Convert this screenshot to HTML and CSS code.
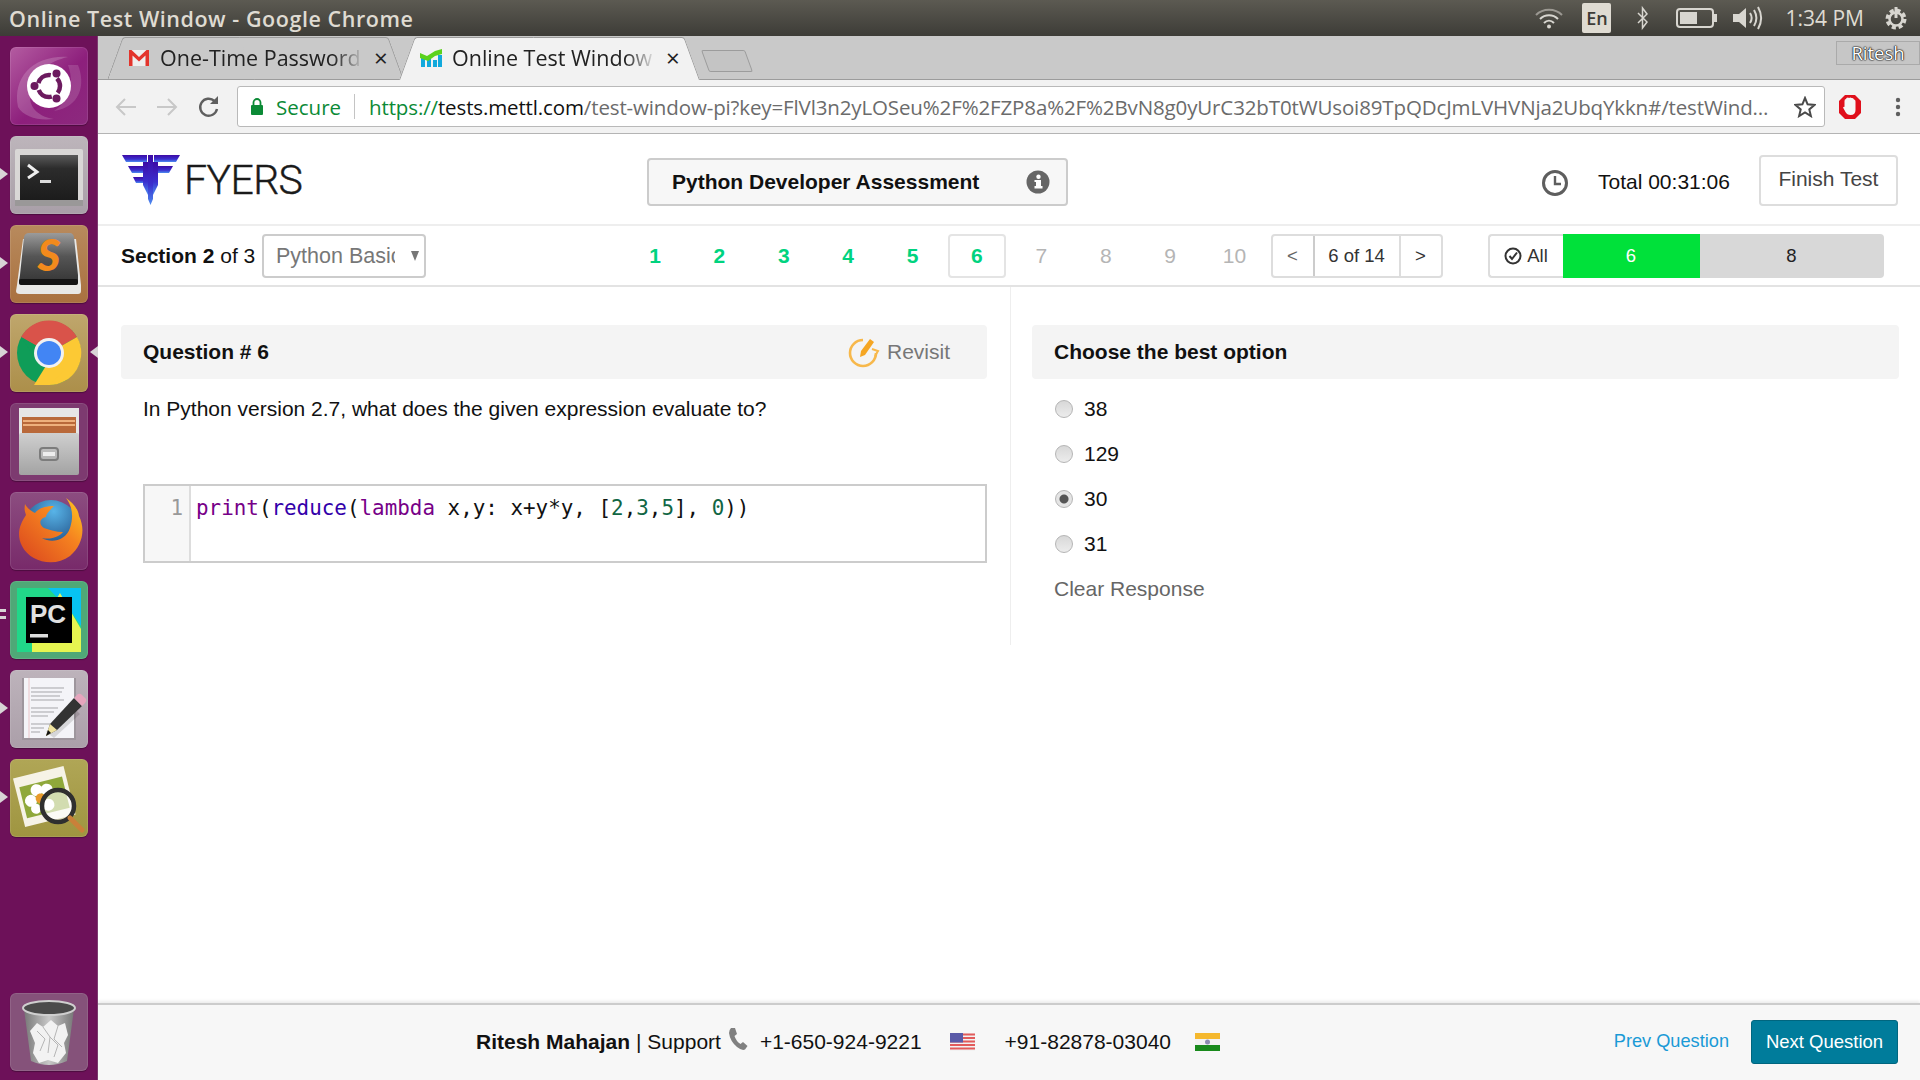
FILE: index.html
```html
<!DOCTYPE html>
<html lang="en">
<head>
    <meta charset="UTF-8">
    <meta name="viewport" content="width=device-width, initial-scale=1.0">
    <title>Online Test Window</title>
    <link rel="stylesheet" href="styles.css">
</head>
<body>
    <div class="topbar">
        <div class="win-title">Online Test Window - Google Chrome</div>
        <div class="tray">
            <svg class="tray-wifi" width="30" height="24" viewBox="0 0 30 24" fill="none" stroke="#d8d6d0" stroke-width="2"><path d="M2 9 C9 2 21 2 28 9" opacity=".55"/><path d="M6 13 C11 8 19 8 24 13"/><path d="M10 17 C13 14 17 14 20 17"/><circle cx="15" cy="20.500" r="2" fill="#d8d6d0" stroke="none"/></svg>
            <div class="tray-lang">En</div>
            <svg class="tray-bt" width="16" height="26" viewBox="0 0 16 26" fill="none" stroke="#d8d6d0" stroke-width="1.500"><path d="M3 8 L12 17 L7.500 23 V3 L12 9 L3 18"/></svg>
            <svg class="tray-batt" width="42" height="24" viewBox="0 0 42 24"><rect x="1" y="3" width="36" height="18" rx="3" fill="none" stroke="#d8d6d0" stroke-width="2"/><rect x="4" y="6" width="17" height="12" fill="#d8d6d0"/><rect x="38" y="8" width="3" height="8" fill="#d8d6d0"/></svg>
            <svg class="tray-vol" width="34" height="28" viewBox="0 0 34 28" fill="none" stroke="#d8d6d0" stroke-width="2"><path d="M2 10 H8 L15 4 V24 L8 18 H2 Z" fill="#d8d6d0" stroke="none"/><path d="M19 9 C21 12 21 16 19 19"/><path d="M23 6 C26 11 26 17 23 22"/><path d="M27 3 C31 10 31 18 27 25"/></svg>
            <div class="tray-time">1:34 PM</div>
            <svg class="tray-gear" width="28" height="30" viewBox="0 0 28 30" fill="none" stroke="#d8d6d0"><circle cx="14" cy="16" r="8.500" stroke-width="4" stroke-dasharray="4 2.700"/><circle cx="14" cy="16" r="6.500" stroke-width="2.500"/><path d="M14 4 V15" stroke-width="3"/></svg>
        </div>
    </div>

    <div class="desktop">
        <aside class="launcher">
            <div class="tile tile-ubuntu">
                <svg width="78" height="78" viewBox="0 0 78 78"><path d="M8 60 C2 30 24 8 58 10 C40 14 20 26 20 50 C20 62 30 70 44 72 C28 74 14 70 8 60 Z" fill="#fff" opacity=".18"/><path d="M68 18 C76 38 70 60 44 64 C56 56 66 40 58 18 Z" fill="#fff" opacity=".14"/><circle cx="39" cy="39" r="22" fill="#fff"/><circle cx="39" cy="39" r="11" fill="none" stroke="#6c1a5f" stroke-width="4.500" stroke-dasharray="16 7.040" stroke-dashoffset="-14.300"/><circle cx="24.500" cy="39" r="4" fill="#6c1a5f"/><circle cx="46.500" cy="26.500" r="4" fill="#6c1a5f"/><circle cx="46.500" cy="51.500" r="4" fill="#6c1a5f"/></svg>
            </div>
            <div class="tile tile-terminal has-pip">
                <svg width="78" height="78" viewBox="0 0 78 78"><defs><linearGradient id="termg" x1="0" y1="0" x2="0" y2="1"><stop offset="0" stop-color="#5a5a5a"/><stop offset=".3" stop-color="#2c2c2c"/><stop offset="1" stop-color="#1c1c1c"/></linearGradient></defs><rect x="5" y="13" width="68" height="57" rx="2" fill="#d9d7d6"/><rect x="5" y="64" width="68" height="6" fill="#9a9898"/><rect x="10" y="19" width="58" height="45" fill="url(#termg)"/><polyline points="18,29 27,36 18,42" fill="none" stroke="#eee" stroke-width="3"/><rect x="30" y="44" width="11" height="3" fill="#ddd"/></svg>
            </div>
            <div class="tile tile-sublime has-pip">
                <svg width="78" height="78" viewBox="0 0 78 78"><defs><linearGradient id="subg" x1="0" y1="0" x2="0" y2="1"><stop offset="0" stop-color="#9b9b9b"/><stop offset=".45" stop-color="#555"/><stop offset="1" stop-color="#333"/></linearGradient></defs><path d="M7 60 L13 14 H66 L71 60 V66 Q71 69 68 69 H10 Q6 69 6 66 Z" fill="#e8e8e6"/><path d="M10 50 L14 12 Q15 8 19 8 H60 Q63 8 64 12 L68 50 V56 Q68 60 64 60 H13 Q9 60 9 56 Z" fill="url(#subg)"/><rect x="9" y="54" width="59" height="6" rx="2" fill="#141414"/><text class="sublime-s" x="39" y="46" text-anchor="middle">S</text></svg>
            </div>
            <div class="tile tile-chrome has-pip has-pip-right">
                <svg width="78" height="78" viewBox="0 0 78 78"><circle cx="39" cy="39" r="32" fill="#0f9d58"/><path d="M39 39 L11 23 A32 32 0 0 1 67 23 Z" fill="#d9534a"/><path d="M39 39 L67 23 A32 32 0 0 1 39 71 Z" fill="#fcc934"/><path d="M11 23 L27 47 L39 39 Z" fill="#0f9d58"/><path d="M24 71 L39 47 L55 56 L39 71 Z" fill="#fcc934"/><circle cx="39" cy="39" r="15" fill="#f1f1f1"/><circle cx="39" cy="39" r="12" fill="#4285f4"/></svg>
            </div>
            <div class="tile tile-files">
                <svg width="78" height="78" viewBox="0 0 78 78"><defs><linearGradient id="fileg" x1="0" y1="0" x2="0" y2="1"><stop offset="0" stop-color="#cfcfcf"/><stop offset="1" stop-color="#a3a3a3"/></linearGradient></defs><rect x="9" y="5" width="60" height="28" fill="#e6e6e6"/><rect x="12" y="14" width="54" height="16" fill="#b9693a"/><path d="M13 18 H65 M13 22 H65" stroke="#eeb07c" stroke-width="2"/><rect x="9" y="30" width="60" height="42" rx="2" fill="url(#fileg)"/><rect x="30" y="45" width="18" height="12" rx="3" fill="none" stroke="#7c7c7c" stroke-width="2"/><rect x="33" y="49" width="12" height="4" fill="#eee"/></svg>
            </div>
            <div class="tile tile-firefox">
                <svg width="78" height="78" viewBox="0 0 78 78"><defs><radialGradient id="ffblue" cx=".55" cy=".2" r=".8"><stop offset="0" stop-color="#58b4e8"/><stop offset="1" stop-color="#14386f"/></radialGradient><linearGradient id="ffor" x1="1" y1="0" x2="0" y2="1"><stop offset="0" stop-color="#ffcb20"/><stop offset=".4" stop-color="#f58220"/><stop offset="1" stop-color="#d9431e"/></linearGradient></defs><circle cx="41" cy="36" r="28" fill="url(#ffblue)"/><path d="M15 12 C14 18 15 20 16 23 C10 32 6 42 12 54 C20 70 44 76 60 64 C72 54 76 38 69 24 C68 16 62 10 56 6 C62 14 64 24 60 36 C56 48 42 52 32 46 C42 48 50 44 53 40 C46 40 40 38 34 36 C28 32 30 26 36 25 C36 22 40 18 44 14 C34 14 28 17 25 21 C21 19 17 16 15 12 Z" fill="url(#ffor)"/></svg>
            </div>
            <div class="tile tile-pycharm has-pip has-pip-double">
                <svg width="78" height="78" viewBox="0 0 78 78"><rect x="7" y="7" width="64" height="64" fill="#21d789"/><path d="M38 7 H71 V45 L62 32 Z" fill="#07c3f2"/><path d="M22 58 L50 12 L71 48 V71 H22 Z" fill="#fcf84a" opacity=".9"/><rect x="16" y="16" width="46" height="46" fill="#000"/><text class="pc-text" x="20" y="42">PC</text><rect x="20" y="53" width="18" height="3.500" fill="#ddd"/></svg>
            </div>
            <div class="tile tile-editor has-pip">
                <svg width="78" height="78" viewBox="0 0 78 78"><rect x="12" y="8" width="54" height="62" fill="#9e969d"/><rect x="14" y="8" width="50" height="60" fill="#f4f4f8"/><path d="M21 18 H54 M21 22 H52 M21 26 H50 M21 30 H54 M21 38 H48 M21 42 H44 M21 46 H38 M21 54 H40 M21 58 H34 M21 62 H30" stroke="#a5a5a9" stroke-width="1"/><path d="M19 8 V68" stroke="#e9b9bb" stroke-width=".8"/><path d="M36 62 L62 36 L70 44 L44 68 Z" fill="#000" opacity=".12"/><path d="M36 66 L40 54 L64 28 L72 36 L47 60 Z" fill="#333"/><path d="M64 28 L68 24 Q70 23 72 25 L76 29 Q77 31 75 33 L72 36 Z" fill="#e6a5bd"/><path d="M36 66 L40 54 L47 60 Z" fill="#f0e3a0"/><path d="M36 66 L38 60 L41 63 Z" fill="#111"/></svg>
            </div>
            <div class="tile tile-viewer has-pip">
                <svg width="78" height="78" viewBox="0 0 78 78"><g transform="rotate(-14 36 36)"><rect x="8" y="12" width="52" height="50" fill="#f6f3e6"/><rect x="12" y="22" width="44" height="32" fill="#8fa83a"/><g fill="#fff"><circle cx="20" cy="38" r="6"/><circle cx="28" cy="29" r="6"/><circle cx="38" cy="31" r="6"/><circle cx="23" cy="47" r="5"/><circle cx="36" cy="46" r="6"/></g><circle cx="30" cy="38" r="5" fill="#e89a2b"/></g><circle cx="48" cy="47" r="16" fill="#fff" fill-opacity=".6" stroke="#2f2f2f" stroke-width="4.500"/><path d="M60 59 L72 71" stroke="#c9803a" stroke-width="5" stroke-linecap="round"/></svg>
            </div>
            <div class="tile tile-trash">
                <svg width="78" height="78" viewBox="0 0 78 78"><defs><linearGradient id="bing" x1="0" y1="0" x2="1" y2="0"><stop offset="0" stop-color="#777"/><stop offset=".5" stop-color="#c8c8c8"/><stop offset="1" stop-color="#777"/></linearGradient></defs><path d="M14 16 L21 68 Q39 76 57 68 L64 16 Q39 26 14 16 Z" fill="url(#bing)"/><ellipse cx="39" cy="15" rx="26" ry="7" fill="#4b4b4b" stroke="#cfcfcf" stroke-width="2"/><path d="M20 38 L27 30 L33 34 L41 27 L48 33 L55 30 L58 42 L54 50 L56 60 L48 70 L38 67 L29 70 L23 60 L25 50 Z" fill="#f2f2f2"/><path d="M27 38 L35 46 L30 58 M33 34 L40 44 L38 60 M48 33 L44 46 L52 54 M40 44 L48 52 L44 64" stroke="#b5b5b5" fill="none"/></svg>
            </div>
        </aside>

        <div class="browser">
            <div class="tabstrip">
                <div class="tab">
                    <svg class="favicon" width="22" height="18" viewBox="0 0 22 18"><rect x="1" y="1" width="20" height="16" fill="#eee"/><path d="M1 17 V1 H3.500 L11 8 L18.500 1 H21 V17 H17.500 V6.500 L11 12.500 L4.500 6.500 V17 Z" fill="#e3342c"/></svg>
                    <span class="tab-label">One-Time Password</span>
                    <span class="tab-close">×</span>
                </div>
                <div class="tab tab-active">
                    <svg class="favicon" width="22" height="18" viewBox="0 0 22 18"><rect x="1" y="9" width="4" height="9" fill="#11a9dc"/><rect x="7" y="8" width="4" height="10" fill="#11a9dc"/><rect x="13" y="11" width="4" height="7" fill="#11a9dc"/><rect x="18" y="6" width="4" height="12" fill="#11a9dc"/><path d="M0 4 L7 7 L15 2 L22 0 V5 L15 7 L8 12 L0 9 Z" fill="#5bd21c"/></svg>
                    <span class="tab-label">Online Test Window</span>
                    <span class="tab-close">×</span>
                </div>
                <div class="newtab"></div>
                <div class="profile">Ritesh</div>
            </div>

            <div class="toolbar">
                <svg class="nav-icon" width="22" height="20" viewBox="0 0 22 20" fill="none" stroke="#c8c8c8" stroke-width="2"><path d="M21 10 H2 M10 2 L2 10 L10 18"/></svg>
                <svg class="nav-icon" width="22" height="20" viewBox="0 0 22 20" fill="none" stroke="#c8c8c8" stroke-width="2"><path d="M1 10 H20 M12 2 L20 10 L12 18"/></svg>
                <svg class="nav-icon" width="22" height="24" viewBox="0 0 22 24" fill="none" stroke="#5f5f5f" stroke-width="2.400"><path d="M19 14 A8.500 8.500 0 1 1 16.500 6"/><path d="M20 1 V9 H12" fill="#5f5f5f" stroke="none"/></svg>
                <div class="omnibox">
                    <svg class="lock" width="14" height="17" viewBox="0 0 14 17"><rect x="1" y="7" width="12" height="10" rx="1" fill="#0b8a36"/><path d="M3.500 7 V4.500 A3.500 3.500 0 0 1 10.500 4.500 V7" fill="none" stroke="#0b8a36" stroke-width="1.800"/></svg>
                    <span class="secure">Secure</span>
                    <span class="omni-sep"></span>
                    <span class="url"><span class="url-scheme">https://</span><span class="url-host">tests.mettl.com</span>/test-window-pi?key=FlVl3n2yLOSeu%2F%2FZP8a%2F%2BvN8g0yUrC32bT0tWUsoi89TpQDcJmLVHVNja2UbqYkkn#/testWind…</span>
                    <svg class="star" width="22" height="22" viewBox="0 0 22 22"><path d="M11 2 L13.600 8.300 L20.500 8.900 L15.300 13.400 L16.900 20.100 L11 16.500 L5.100 20.100 L6.700 13.400 L1.500 8.900 L8.400 8.300 Z" fill="none" stroke="#4a4a4a" stroke-width="2"/></svg>
                </div>
                <svg class="adblock" width="24" height="26" viewBox="0 0 24 26"><path d="M7 1 H17 L23 7 V19 L17 25 H7 L1 19 V7 Z" fill="#e0101c"/><path d="M6.500 13 V7 Q6.500 5 8 5 L8.500 4 Q10 3 11 4 Q12.500 3 13.500 4 Q15.500 3.500 16 5.500 Q17.500 5.500 17.500 7.500 V16 Q17.500 21 12.500 21 Q9 21 7.500 18 L5 13.500 Q6 12.500 6.500 13 Z" fill="#f6f6f6"/></svg>
                <svg class="menu-dots" width="6" height="20" viewBox="0 0 6 20" fill="#5f5f5f"><circle cx="3" cy="3" r="2.200"/><circle cx="3" cy="10" r="2.200"/><circle cx="3" cy="17" r="2.200"/></svg>
            </div>

            <div class="page">
                <header class="page-head">
                    <div class="logo">
                        <svg width="58" height="50" viewBox="0 0 58 50"><defs><linearGradient id="fyersg" x1="0" y1="0" x2="0" y2="1"><stop offset="0" stop-color="#3d0aa5"/><stop offset=".6" stop-color="#3a30cf"/><stop offset="1" stop-color="#4d8df0"/></linearGradient></defs><path d="M0 0 H25 V7 H4 Z" fill="url(#fyersg)"/><path d="M32 0 H58 L54 7 H32 Z" fill="url(#fyersg)"/><path d="M6 11 H24 V18 H10 Z" fill="url(#fyersg)"/><path d="M33 11 H51 L47 18 H33 Z" fill="url(#fyersg)"/><path d="M11 22 H24 V28 H14 Z" fill="url(#fyersg)"/><path d="M26 0 H31 V44 L28.500 50 L26 44 Z" fill="url(#fyersg)"/><path d="M21 7 H26 V40 L21 30 Z" fill="url(#fyersg)"/><path d="M31 7 H36 V30 L31 40 Z" fill="url(#fyersg)"/></svg>
                        <span class="logo-text">FYERS</span>
                    </div>
                    <div class="assessment">
                        <span>Python Developer Assessment</span>
                        <svg width="24" height="24" viewBox="0 0 24 24"><circle cx="12" cy="12" r="11.500" fill="#666"/><rect x="10" y="10" width="5" height="8" fill="#fff"/><rect x="8.500" y="16" width="8" height="2.500" fill="#fff"/><rect x="8.500" y="10" width="3" height="2" fill="#fff"/><circle cx="12.500" cy="6.800" r="2.200" fill="#fff"/></svg>
                    </div>
                    <div class="timer">
                        <svg width="28" height="28" viewBox="0 0 28 28" fill="none" stroke="#5e5e5e" stroke-width="3"><circle cx="14" cy="14" r="11.500"/><path d="M14 7 V15 H20" stroke-width="2.400"/></svg>
                        <span>Total 00:31:06</span>
                    </div>
                    <button class="finish">Finish Test</button>
                </header>

                <nav class="section-bar">
                    <div class="section-label"><b>Section 2</b> of 3</div>
                    <div class="section-select"><span>Python Basic</span><i class="caret"></i></div>
                    <div class="q-numbers">
                        <span class="q-num q-done">1</span>
                        <span class="q-num q-done">2</span>
                        <span class="q-num q-done">3</span>
                        <span class="q-num q-done">4</span>
                        <span class="q-num q-done">5</span>
                        <span class="q-num q-done q-current">6</span>
                        <span class="q-num">7</span>
                        <span class="q-num">8</span>
                        <span class="q-num">9</span>
                        <span class="q-num">10</span>
                    </div>
                    <div class="pager">
                        <span class="pager-arrow">&lt;</span>
                        <span class="pager-count">6 of 14</span>
                        <span class="pager-arrow pager-next">&gt;</span>
                    </div>
                    <div class="progress">
                        <div class="progress-all">
                            <svg width="18" height="18" viewBox="0 0 18 18" fill="none" stroke="#333" stroke-width="2"><circle cx="9" cy="9" r="7.500"/><path d="M5.500 9 L8 12 L13 5.500"/></svg>
                            All
                        </div>
                        <div class="progress-done">6</div>
                        <div class="progress-left">8</div>
                    </div>
                </nav>

                <main class="test-body">
                    <section class="col-question">
                        <div class="panel-head">
                            <h3>Question # 6</h3>
                            <div class="revisit">
                                <svg width="32" height="32" viewBox="0 0 32 32" fill="none"><path d="M15 4 A13 13 0 1 0 28 17" stroke="#f7b84b" stroke-width="2.600"/><path d="M24 13 L30 15 L27 20" stroke="#f7b84b" stroke-width="2"/><path d="M12 21 L13 15 L22 3 L26 6 L17 19 Z" fill="#f5a623"/></svg>
                                <span>Revisit</span>
                            </div>
                        </div>
                        <p class="q-text">In Python version 2.7, what does the given expression evaluate to?</p>
                        <div class="code-box">
                            <div class="code-gutter">1</div>
                            <pre class="code-line"><span class="cm-kw">print</span>(<span class="cm-bi">reduce</span>(<span class="cm-kw">lambda</span> x,y: x+y*y, [<span class="cm-num">2</span>,<span class="cm-num">3</span>,<span class="cm-num">5</span>], <span class="cm-num">0</span>))</pre>
                        </div>
                    </section>
                    <section class="col-answer">
                        <div class="panel-head">
                            <h3>Choose the best option</h3>
                        </div>
                        <label class="option"><input type="radio" name="answer"><span>38</span></label>
                        <label class="option"><input type="radio" name="answer"><span>129</span></label>
                        <label class="option"><input type="radio" name="answer" checked><span>30</span></label>
                        <label class="option"><input type="radio" name="answer"><span>31</span></label>
                        <div class="clear-response">Clear Response</div>
                    </section>
                </main>

                <footer class="page-foot">
                    <div class="support">
                        <b>Ritesh Mahajan</b> <span class="support-label">| Support</span>
                        <svg class="phone" width="20" height="24" viewBox="0 0 20 24"><path d="M3 1 L7 1 L9 7 L6.500 9 Q8 14 12.500 17 L15 15 L19.500 19 L17 22.500 Q14 24 9 20 Q2 14 1 6 Q1 3 3 1 Z" fill="#808080"/></svg>
                        <span class="phone-no">+1-650-924-9221</span>
                        <svg class="flag" width="25" height="18" viewBox="0 0 25 18"><rect width="25" height="18" fill="#f2f2f2"/><path d="M0 1.500 H25 M0 5 H25 M0 8.500 H25 M0 12 H25 M0 15.500 H25" stroke="#e25b5b" stroke-width="1.800"/><rect width="13" height="9.500" fill="#5a5aa8"/></svg>
                        <span class="phone-no phone-in">+91-82878-03040</span>
                        <svg class="flag" width="25" height="18" viewBox="0 0 25 18"><rect width="25" height="6" fill="#f5b82e"/><rect y="6" width="25" height="6" fill="#f2f2f2"/><rect y="12" width="25" height="6" fill="#198a1c"/><circle cx="12.500" cy="9" r="2.500" fill="#8c8cb0"/></svg>
                    </div>
                    <a class="prev-q">Prev Question</a>
                    <button class="next-q">Next Question</button>
                </footer>
            </div>
        </div>
    </div>
</body>
</html>
```

FILE: styles.css
```css
* {
    box-sizing: border-box;
}
html, body {
    margin: 0;
    height: 100%;
    overflow: hidden;
}
body {
    width: 1920px;
    height: 1080px;
    display: flex;
    flex-direction: column;
    font-family: "Liberation Sans", Arial, sans-serif;
    color: #111;
    background: #fff;
}

/* ubuntu top panel */
.topbar {
    height: 36px;
    flex: none;
    display: flex;
    align-items: center;
    justify-content: space-between;
    background: linear-gradient(#5c5a52, #3d3c37);
}
.win-title {
    margin-left: 9px;
    font-family: "Open Sans", sans-serif;
    font-size: 21.500px;
    font-weight: 600;
    letter-spacing: 0.55px;
    color: #dfdbd2;
    white-space: nowrap;
}
.tray {
    display: flex;
    align-items: center;
    color: #dfdbd2;
    font-family: "Open Sans", sans-serif;
}
.tray-lang {
    width: 29px;
    height: 30px;
    margin-left: 18px;
    background: #dfdbd2;
    color: #3d3c37;
    border-radius: 2px;
    font-size: 18px;
    font-weight: 600;
    text-align: center;
    line-height: 30px;
}
.tray-bt { margin-left: 24px; }
.tray-batt { margin-left: 25px; }
.tray-vol { margin-left: 13px; }
.tray-time {
    margin-left: 20px;
    font-size: 21px;
    white-space: nowrap;
}
.tray-gear { margin-left: 18px; margin-right: 10px; }
.tray-wifi { margin-right: 0; }

.desktop {
    flex: 1;
    display: flex;
    min-height: 0;
}

/* launcher */
.launcher {
    width: 98px;
    flex: none;
    background: #6d1159;
    display: flex;
    flex-direction: column;
    align-items: center;
    gap: 11px;
    padding: 11px 0 9px;
    border-right: 1px solid #7d3a70;
}
.tile {
    position: relative;
    width: 78px;
    height: 78px;
    flex: none;
    border-radius: 6px;
    box-shadow: inset 0 0 0 1px rgba(255, 255, 255, 0.1), 0 1px 1px rgba(0, 0, 0, 0.3);
}
.tile svg { display: block; }
.tile-ubuntu { background: linear-gradient(135deg, #b45ca1, #8d1f7c 55%, #8c2a7e); }
.tile-terminal { background: linear-gradient(#bdb5bb, #a99fa8); }
.tile-sublime { background: linear-gradient(#b88a5d, #a9713f); }
.tile-chrome { background: linear-gradient(#bfa66c, #ac8f4a); }
.tile-files { background: #7d3a70; }
.tile-firefox { background: linear-gradient(#8c4d80, #782a6a); }
.tile-pycharm { background: #4fa877; }
.tile-editor { background: linear-gradient(#bdb3bb, #ab9fa9); }
.tile-viewer { background: linear-gradient(#b0a656, #9f9540); }
.tile-trash { margin-top: auto; background: #85527a; }
.has-pip::before,
.has-pip-right::after {
    content: "";
    position: absolute;
    top: 32px;
    border-style: solid;
    border-color: transparent;
}
.has-pip::before {
    left: -10px;
    border-width: 6px 0 6px 8px;
    border-left-color: #d8d4d6;
}
.has-pip-right::after {
    right: -10px;
    border-width: 6px 8px 6px 0;
    border-right-color: #d8d4d6;
}
.has-pip-double::before {
    top: 28px;
    width: 6px;
    height: 3px;
    border: 0;
    background: #d8d4d6;
    box-shadow: 0 7px 0 #d8d4d6;
}
.sublime-s {
    font-family: "Lato", sans-serif;
    font-size: 44px;
    font-weight: 900;
    font-style: italic;
    fill: #f28a1c;
}
.pc-text {
    font-family: "Liberation Sans", sans-serif;
    font-size: 26px;
    font-weight: 700;
    fill: #e0e0e0;
}

/* chrome */
.browser {
    flex: 1;
    min-width: 0;
    display: flex;
    flex-direction: column;
}
.tabstrip {
    height: 44px;
    flex: none;
    position: relative;
    display: flex;
    align-items: flex-end;
    background: #c9c9c9;
    border-bottom: 1px solid #9c9c9c;
    padding-left: 9px;
}
.tab {
    position: relative;
    width: 295px;
    height: 43px;
    margin-bottom: -1px;
    display: flex;
    align-items: center;
    padding: 0 0 2px 21px;
    z-index: 1;
    font-family: "Open Sans", sans-serif;
    font-size: 21.500px;
    color: #222;
}
.tab::before {
    content: "";
    position: absolute;
    top: 0;
    bottom: 0;
    left: 0;
    width: 50%;
    background: #c9c9c9;
    border: 1px solid #9c9c9c;
    border-right: 0;
    border-radius: 3px 0 0 0;
    transform: skewX(-20deg);
    transform-origin: bottom left;
    z-index: -1;
}
.tab::after {
    content: "";
    position: absolute;
    top: 0;
    bottom: 0;
    right: -1px;
    width: 50%;
    background: #c9c9c9;
    border: 1px solid #9c9c9c;
    border-left: 0;
    border-radius: 0 3px 0 0;
    transform: skewX(20deg);
    transform-origin: bottom right;
    z-index: -1;
}
.tab-active {
    margin-left: -3px;
    width: 300px;
    z-index: 2;
}
.tab-active::before,
.tab-active::after {
    background: #f2f2f2;
    border-bottom: 0;
}
.tab-label {
    width: 204px;
    margin-left: 10px;
    overflow: hidden;
    white-space: nowrap;
    -webkit-mask-image: linear-gradient(90deg, #000 85%, transparent);
    mask-image: linear-gradient(90deg, #000 85%, transparent);
}
.tab-close {
    margin-left: 10px;
    font-size: 24px;
    line-height: 1;
}
.newtab {
    width: 44px;
    height: 22px;
    margin: 0 0 7px 6px;
    background: #c4c4c4;
    border: 1px solid #9c9c9c;
    border-radius: 2px;
    transform: skewX(20deg);
}
.profile {
    position: absolute;
    right: 0;
    top: 5px;
    width: 84px;
    height: 24px;
    background: #c6c6c6;
    border: 1px solid #aaa;
    text-align: center;
    font-family: "Open Sans", sans-serif;
    font-size: 18.500px;
    line-height: 22px;
    color: #fff;
    text-shadow: 0 0 2px #000, 0 0 1px #000, 0 0 1px #000;
}
.toolbar {
    height: 54px;
    flex: none;
    display: flex;
    align-items: center;
    background: #f2f2f2;
    border-bottom: 1px solid #b4b4b4;
    padding-left: 17px;
}
.nav-icon { margin-right: 19px; flex: none; }
.nav-icon:nth-child(3) { margin: 0 17px 0 1px; }
.omnibox {
    width: 1588px;
    height: 41px;
    flex: none;
    display: flex;
    align-items: center;
    background: #fff;
    border: 1px solid #b9b9b9;
    border-radius: 3px;
    padding-left: 12px;
    font-family: "Open Sans", sans-serif;
    font-size: 20.500px;
    white-space: nowrap;
}
.secure {
    margin-left: 12px;
    color: #0b8a36;
}
.omni-sep {
    width: 1px;
    height: 25px;
    margin: 0 14px 0 13px;
    background: #c4c4c4;
}
.url {
    flex: 1;
    min-width: 0;
    overflow: hidden;
    color: #6b6b6b;
    letter-spacing: -0.13px;
}
.url-scheme { color: #0b8a36; }
.url-host { color: #111; }
.star { margin: 0 8px 0 18px; flex: none; }
.adblock { margin-left: 13px; flex: none; }
.menu-dots { margin-left: 33px; flex: none; }

/* test page */
.page {
    flex: 1;
    min-height: 0;
    display: flex;
    flex-direction: column;
    background: #fff;
}
.page-head {
    height: 92px;
    flex: none;
    display: flex;
    align-items: center;
    padding: 2px 0 0 24px;
    border-bottom: 2px solid #eee;
}
.logo {
    width: 525px;
    display: flex;
    align-items: center;
    gap: 4px;
}
.logo-text {
    font-family: "Roboto", sans-serif;
    font-size: 41px;
    font-weight: 300;
    color: #1a1a1a;
    -webkit-text-stroke: 0.4px #1a1a1a;
    letter-spacing: -0.6px;
}
.assessment {
    width: 421px;
    height: 48px;
    margin-top: 3px;
    display: flex;
    align-items: center;
    justify-content: space-between;
    padding: 0 16px 0 23px;
    background: #f7f7f7;
    border: 2px solid #ccc;
    border-radius: 4px;
    font-size: 21px;
    font-weight: 700;
}
.timer {
    margin: 3px 0 0 473px;
    display: flex;
    align-items: center;
    gap: 29px;
    font-size: 21px;
    white-space: nowrap;
}
.timer svg { margin-top: 2px; }
.finish {
    width: 139px;
    height: 51px;
    margin-left: 29px;
    background: #fff;
    border: 2px solid #ddd;
    border-radius: 4px;
    font-family: "Liberation Sans", Arial, sans-serif;
    font-size: 21px;
    color: #444;
    padding-bottom: 4px;
}
.section-bar {
    height: 61px;
    flex: none;
    display: flex;
    align-items: center;
    padding-left: 23px;
    border-bottom: 2px solid #e3e3e3;
}
.section-label {
    width: 141px;
    padding-top: 1px;
    font-size: 21px;
    white-space: nowrap;
}
.section-select {
    position: relative;
    width: 164px;
    height: 44px;
    border: 2px solid #ccc;
    border-radius: 4px;
    padding-left: 12px;
    font-size: 21.500px;
    line-height: 40px;
    color: #777;
    overflow: hidden;
    white-space: nowrap;
}
.section-select span {
    display: block;
    width: 119px;
    overflow: hidden;
}
.caret {
    position: absolute;
    right: 5px;
    top: 15px;
    border-style: solid;
    border-width: 10px 4.500px 0;
    border-color: #777 transparent transparent;
}
.q-numbers {
    margin-left: 200px;
    display: flex;
    gap: 6.400px;
}
.q-num {
    width: 58px;
    height: 44px;
    text-align: center;
    font-size: 21px;
    line-height: 44px;
    color: #b5b5b5;
}
.q-done {
    color: #00d37f;
    font-weight: 700;
}
.q-current {
    border: 2px solid #e4e4e4;
    border-radius: 4px;
    line-height: 40px;
}
.pager {
    margin-left: 7px;
    height: 44px;
    display: flex;
    border: 2px solid #ddd;
    border-radius: 4px;
    font-size: 18.500px;
    line-height: 40px;
}
.pager-arrow {
    width: 40px;
    text-align: center;
    color: #666;
}
.pager-count {
    width: 88px;
    text-align: center;
    color: #333;
    border-left: 2px solid #ccc;
    border-right: 2px solid #ddd;
}
.pager-next { color: #333; }
.progress {
    width: 396px;
    height: 44px;
    margin-left: 45px;
    display: flex;
    font-size: 18.500px;
    line-height: 44px;
    text-align: center;
}
.progress-all {
    width: 75px;
    display: flex;
    align-items: center;
    justify-content: center;
    gap: 5px;
    border: 2px solid #ddd;
    border-right: 0;
    border-radius: 4px 0 0 4px;
    color: #333;
}
.progress-done {
    width: 137px;
    background: #00e13a;
    color: #fff;
}
.progress-left {
    flex: 1;
    background: #d8d8d8;
    border-radius: 0 4px 4px 0;
    color: #222;
}

.test-body {
    flex: 1;
    min-height: 0;
    display: flex;
    align-items: flex-start;
}
.col-question,
.col-answer {
    height: 358px;
    padding-top: 38px;
}
.col-question {
    width: 913px;
    padding-left: 23px;
    padding-right: 23px;
    border-right: 1px solid #eee;
}
.col-answer {
    flex: 1;
    padding-left: 21px;
    padding-right: 21px;
}
.panel-head {
    height: 54px;
    display: flex;
    align-items: center;
    justify-content: space-between;
    padding: 0 37px 0 22px;
    background: #f4f4f4;
    border-radius: 4px;
}
.panel-head h3 {
    margin: 0;
    font-size: 21px;
    font-weight: 700;
}
.revisit {
    display: flex;
    align-items: center;
    gap: 7px;
    font-size: 21px;
    color: #777;
}
.q-text {
    margin: 17px 0 0 22px;
    font-size: 21px;
    line-height: 26px;
}
.code-box {
    height: 79px;
    margin: 62px 0 0 22px;
    display: flex;
    border: 2px solid #ccc;
}
.code-gutter {
    width: 46px;
    padding: 9px 6px 0 0;
    background: #f7f7f7;
    border-right: 2px solid #ddd;
    text-align: right;
    font-family: "DejaVu Sans Mono", monospace;
    font-size: 20.900px;
    line-height: 26px;
    color: #999;
}
.code-line {
    margin: 0;
    padding: 9px 0 0 5px;
    font-family: "DejaVu Sans Mono", monospace;
    font-size: 20.900px;
    line-height: 26px;
    color: #111;
}
.cm-kw { color: #708; }
.cm-bi { color: #30a; }
.cm-num { color: #164; }
.option {
    height: 45px;
    margin: 0 0 0 22px;
    display: flex;
    align-items: center;
    font-size: 21px;
}
.panel-head + .option { margin-top: 7px; }
.option input {
    appearance: none;
    width: 18px;
    height: 18px;
    margin: 0 11px 0 1px;
    border: 1px solid #b5b5b5;
    border-radius: 50%;
    background: linear-gradient(#d8d8d8, #ececec);
}
.option input:checked {
    background: radial-gradient(circle, #555 0 4px, #e4e4e4 5px);
}
.clear-response {
    margin: 1px 0 0 22px;
    height: 44px;
    font-size: 21px;
    line-height: 44px;
    color: #666;
}
.page-foot {
    height: 77px;
    margin-top: auto;
    flex: none;
    display: flex;
    align-items: center;
    padding: 0 22px 2px 378px;
    background: #f7f7f7;
    border-top: 2px solid #ccc;
    box-shadow: 0 -2px 3px rgba(0, 0, 0, 0.08);
}
.support {
    display: flex;
    align-items: center;
    font-size: 21px;
    white-space: nowrap;
}
.support-label { margin-left: 6px; }
.phone { margin: -6px 0 0 7px; }
.phone-no { margin-left: 12px; }
.flag { margin-left: 28px; }
.phone-in { margin-left: 30px; }
.phone-in + .flag { margin-left: 24px; }
.prev-q {
    margin-left: auto;
    font-size: 18.200px;
    color: #1a9ad6;
    white-space: nowrap;
}
.next-q {
    width: 147px;
    height: 44px;
    margin-left: 22px;
    background: #007c9b;
    border: 1px solid #00667f;
    border-radius: 3px;
    font-family: "Liberation Sans", Arial, sans-serif;
    font-size: 18.500px;
    color: #fff;
}
```
